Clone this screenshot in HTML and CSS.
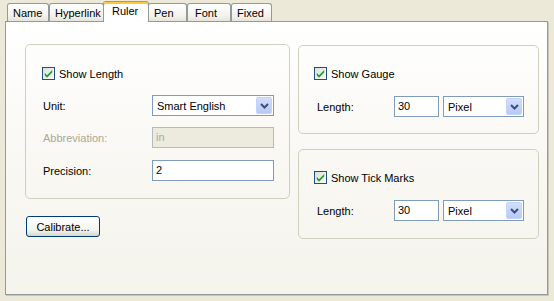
FILE: index.html
```html
<!DOCTYPE html>
<html lang="en">
<head>
    <meta charset="UTF-8">
    <title>Ruler Properties</title>
    <link rel="stylesheet" href="styles.css">
</head>
<body>
    <div class="dialog">
        <div class="tabs">
            <div class="tab tab-name">Name</div>
            <div class="tab tab-link">Hyperlink</div>
            <div class="tab tab-active">Ruler</div>
            <div class="tab tab-pen">Pen</div>
            <div class="tab tab-font">Font</div>
            <div class="tab tab-fixed">Fixed</div>
        </div>

        <div class="panel">
            <div class="col-left">
                <div class="group group-length">
                    <label class="check-row">
                        <span class="checkbox"><svg width="11" height="11" viewBox="0 0 11 11"><path d="M1.8 4.8l2.2 2.4L9.2 2v2.6L4 9.8 1.8 7.4z" fill="#21A121"/></svg></span>
                        Show Length
                    </label>
                    <div class="field-row row-unit">
                        <span class="field-label">Unit:</span>
                        <div class="select select-wide">
                            <span class="select-text">Smart English</span>
                            <span class="select-btn"><svg width="9" height="6" viewBox="0 0 9 6"><path d="M1 1l3.5 3.5L8 1" fill="none" stroke="#3C4F80" stroke-width="2"/></svg></span>
                        </div>
                    </div>
                    <div class="field-row row-abbr">
                        <span class="field-label label-disabled">Abbreviation:</span>
                        <div class="edit edit-wide edit-disabled">in</div>
                    </div>
                    <div class="field-row row-precision">
                        <span class="field-label">Precision:</span>
                        <div class="edit edit-wide">2</div>
                    </div>
                </div>
                <button class="btn">Calibrate...</button>
            </div>

            <div class="col-right">
                <div class="group group-gauge">
                    <label class="check-row">
                        <span class="checkbox"><svg width="11" height="11" viewBox="0 0 11 11"><path d="M1.8 4.8l2.2 2.4L9.2 2v2.6L4 9.8 1.8 7.4z" fill="#21A121"/></svg></span>
                        Show Gauge
                    </label>
                    <div class="field-row row-length">
                        <span class="field-label label-short">Length:</span>
                        <div class="edit edit-num">30</div>
                        <div class="select select-unit">
                            <span class="select-text">Pixel</span>
                            <span class="select-btn"><svg width="9" height="6" viewBox="0 0 9 6"><path d="M1 1l3.5 3.5L8 1" fill="none" stroke="#3C4F80" stroke-width="2"/></svg></span>
                        </div>
                    </div>
                </div>
                <div class="group group-ticks">
                    <label class="check-row">
                        <span class="checkbox"><svg width="11" height="11" viewBox="0 0 11 11"><path d="M1.8 4.8l2.2 2.4L9.2 2v2.6L4 9.8 1.8 7.4z" fill="#21A121"/></svg></span>
                        Show Tick Marks
                    </label>
                    <div class="field-row row-length">
                        <span class="field-label label-short">Length:</span>
                        <div class="edit edit-num">30</div>
                        <div class="select select-unit">
                            <span class="select-text">Pixel</span>
                            <span class="select-btn"><svg width="9" height="6" viewBox="0 0 9 6"><path d="M1 1l3.5 3.5L8 1" fill="none" stroke="#3C4F80" stroke-width="2"/></svg></span>
                        </div>
                    </div>
                </div>
            </div>
        </div>
    </div>
</body>
</html>
```

FILE: styles.css
```css
:root {
    --color-face: #ECE9D8;
    --color-tab-border: #919B9C;
    --color-group: #D0D0BF;
    --color-edit: #7F9DB9;
    --color-disabled: #ACA899;
}

* {
    box-sizing: border-box;
}

body {
    margin: 0;
    width: 554px;
    height: 301px;
    overflow: hidden;
    background-color: var(--color-face);
    font-family: 'Liberation Sans', Arial, sans-serif;
    font-size: 11px;
    color: #000;
}

.dialog {
    padding: 1px 6px 0 5px;
}

/* tab strip */
.tabs {
    display: flex;
    align-items: flex-end;
    height: 20px;
    padding-left: 2px;
}

.tab {
    height: 18px;
    padding: 3px 0 0 5px;
    border: 1px solid var(--color-tab-border);
    border-bottom: none;
    border-radius: 3px 3px 0 0;
    background: linear-gradient(#ffffff, #F3F2EC 70%, #E6E4D8);
    line-height: 13px;
    white-space: nowrap;
}

.tab-name { width: 42px; }
.tab-link { width: 55px; }
.tab-pen { width: 39px; }
.tab-font { width: 44px; padding-left: 7px; }
.tab-fixed { width: 41px; }

.tab-active {
    position: relative;
    z-index: 1;
    width: 46px;
    height: 21px;
    margin: 0 -1px -1px;
    padding: 3px 0 0 8px;
    border-top: 1px solid #E68B2C;
    box-shadow: inset 0 2px 0 #FFC73C;
    background: #ffffff;
}

/* page */
.panel {
    display: grid;
    grid-template-columns: 265px 241px;
    column-gap: 8px;
    align-items: start;
    height: 274px;
    padding: 22px 10px 0 19px;
    border: 1px solid var(--color-tab-border);
    background: linear-gradient(#ffffff, #FAF9F5 40%, #F4F3EC);
    box-shadow: 1px 1px 0 #C8C5B7;
}

.group {
    border: 1px solid var(--color-group);
    border-radius: 5px;
}

.group-length {
    padding: 22px 15px 17px 16px;
}

.col-right {
    margin-top: 1px;
}

.group-gauge {
    padding: 21px 14px 16px 15px;
}

.group-ticks {
    margin-top: 15px;
    padding: 21px 14px 17px 15px;
}

.check-row {
    display: flex;
    align-items: center;
    gap: 4px;
    height: 13px;
}

.checkbox {
    display: flex;
    align-items: center;
    justify-content: center;
    width: 13px;
    height: 13px;
    border: 1px solid #1C5180;
    background: linear-gradient(135deg, #DCDCD7, #ffffff);
}

.field-row {
    display: flex;
    align-items: center;
    height: 21px;
}

.row-unit { margin-top: 15px; }
.row-abbr { margin-top: 11px; }
.row-precision { margin-top: 12px; }
.row-length { margin-top: 16px; }

.field-label {
    width: 110px;
    padding-left: 1px;
}

.label-short {
    width: 80px;
    padding-left: 3px;
}

.label-disabled {
    color: var(--color-disabled);
}

.edit {
    height: 21px;
    padding: 0 3px;
    border: 1px solid var(--color-edit);
    background: #ffffff;
    line-height: 19px;
}

.edit-wide { width: 122px; }
.edit-num { width: 45px; margin-right: 4px; }

.edit-disabled {
    border-color: #B3BBC3;
    background: #ECEBDD;
    color: var(--color-disabled);
}

.select {
    display: flex;
    align-items: center;
    justify-content: space-between;
    height: 21px;
    padding: 1px;
    border: 1px solid var(--color-edit);
    background: #ffffff;
}

.select-wide { width: 122px; }
.select-unit { width: 81px; }

.select-text {
    padding-left: 3px;
}

.select-btn {
    display: flex;
    align-items: center;
    justify-content: center;
    width: 16px;
    height: 17px;
    border-radius: 2px;
    background: linear-gradient(#D2DEFB, #B7CAF5);
    border: 1px solid #C3D3FD;
}

.btn {
    display: block;
    width: 74px;
    height: 21px;
    margin: 17px 0 0 1px;
    padding: 0;
    border: 1px solid #003C74;
    border-radius: 3px;
    background: linear-gradient(#ffffff, #F3F3EF 70%, #D8D4C8);
    font-family: 'Liberation Sans', Arial, sans-serif;
    font-size: 11px;
    color: #000;
}
```
